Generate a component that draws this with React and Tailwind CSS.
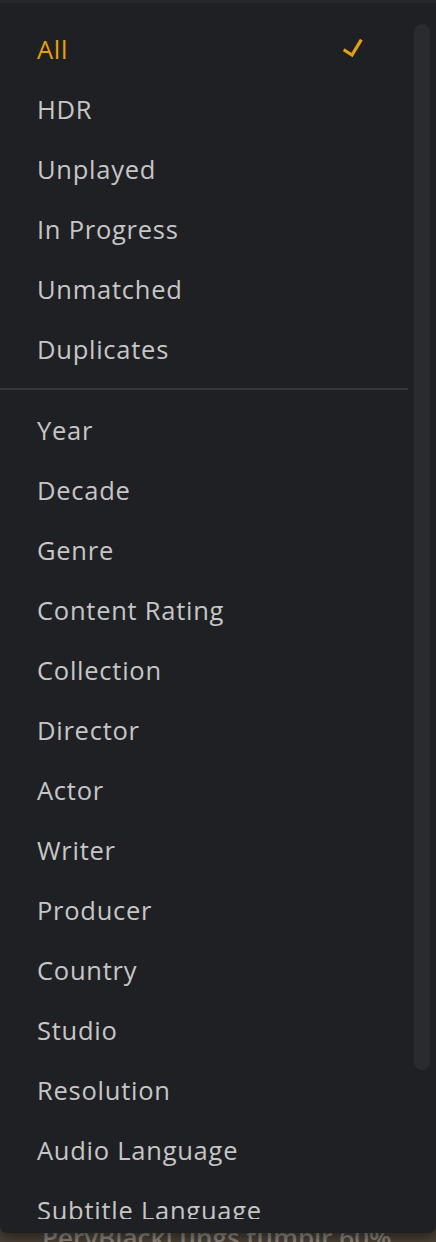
import { useState } from "react";

const TOP = ["All", "HDR", "Unplayed", "In Progress", "Unmatched", "Duplicates"];
const BOTTOM = [
  "Year",
  "Decade",
  "Genre",
  "Content Rating",
  "Collection",
  "Director",
  "Actor",
  "Writer",
  "Producer",
  "Country",
  "Studio",
  "Resolution",
  "Audio Language",
  "Subtitle Language",
  "Frame Rate",
];

function Check() {
  return (
    <svg className="w-[26px] h-[26px]" viewBox="0 0 26 26" fill="none">
      <path d="M3 14.5l7 4.5 8.5-14" stroke="#e5a00d" strokeWidth="3.2" strokeLinecap="square" />
    </svg>
  );
}

function Item({ label, active, onClick }) {
  return (
    <button
      onClick={onClick}
      className={`flex items-center justify-between w-full h-[60px] pl-[37px] pr-[68px] text-left text-[25.5px] font-medium tracking-[0.75px] ${
        active ? "text-[#e5a00d]" : "text-[#c6c6c6]"
      }`}
    >
      <span>{label}</span>
      {active && <Check />}
    </button>
  );
}

export default function App() {
  const [selected, setSelected] = useState("All");

  return (
    <div className="h-[1242px] overflow-hidden bg-[#4a4137] font-['Open_Sans','Liberation_Sans',sans-serif]">
      {/* dropdown panel */}
      <div className="relative h-[1233px] bg-[#1f2023] rounded-b-[7px] border-t-[3px] border-[#26272a] shadow-[0_4px_12px_rgba(0,0,0,0.5)]">
        <div className="h-[1216px] overflow-hidden pt-[16px]">
          {TOP.map((t) => (
            <Item key={t} label={t} active={selected === t} onClick={() => setSelected(t)} />
          ))}
          <div className="mt-[9px] mb-[10px] mr-[28px] h-[2px] bg-[#36373a]" />
          {BOTTOM.map((t) => (
            <Item key={t} label={t} active={selected === t} onClick={() => setSelected(t)} />
          ))}
        </div>

        {/* scrollbar */}
        <div className="absolute right-[6px] top-[21px] w-[16px] h-[1046px] rounded-full bg-[#2a2b2e]" />
      </div>

      {/* content behind the menu */}
      <div className="h-[9px] overflow-hidden">
        <p className="-mt-[12px] pl-[42px] text-[26px] leading-[32px] font-semibold text-[#8b8780] whitespace-nowrap">
          PervBlackLungs tumblr 60%
        </p>
      </div>
    </div>
  );
}
